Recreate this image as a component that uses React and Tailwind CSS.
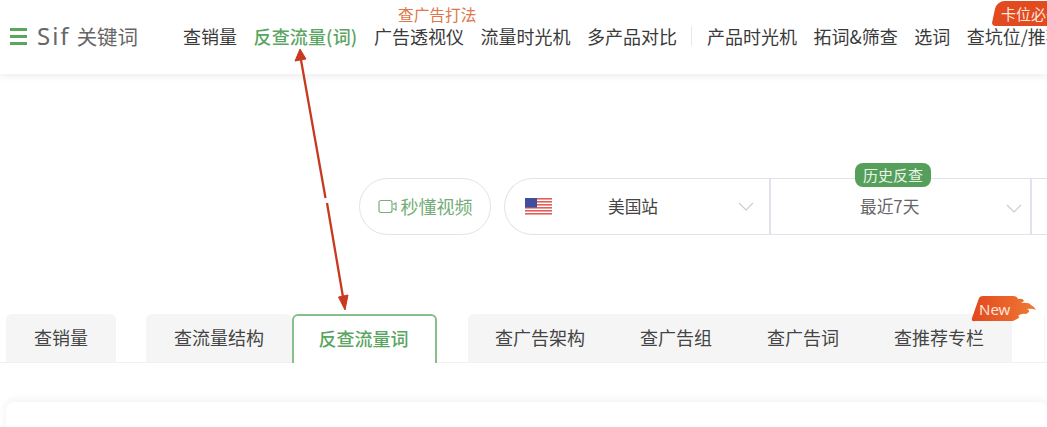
import React from "react";

const font = { fontFamily: '"Noto Sans CJK SC", "Noto Sans", sans-serif' };

function NavItem({ children, green, note, tag, className = "" }) {
  return (
    <div className={`relative shrink-0 text-[18px] leading-[26px] whitespace-nowrap ${green ? "font-medium text-[#5aa55f]" : "text-[#3a3a3a]"} ${className}`}>
      {children}
      {note && (
        <span className="absolute left-[24px] top-[-18px] text-[15.7px] leading-[20px] text-[#e0774a]">{note}</span>
      )}
      {tag && (
        <span className="absolute left-[27px] top-[-22px] h-[25px] w-[90px] pl-[7px] rounded-tl-[8px] rounded-bl-[4px] -skew-x-12 bg-[#e24a1f] text-[15px] leading-[25px] text-[#ffe9df]">
          <span className="inline-block skew-x-12">{tag}</span>
        </span>
      )}
    </div>
  );
}

function Chevron({ className = "" }) {
  return (
    <svg className={`shrink-0 ${className}`} width="16" height="9" viewBox="0 0 16 9" fill="none" stroke="#c9cbd0" strokeWidth="1.1">
      <path d="M1 1l7 7 7-7" />
    </svg>
  );
}

function VideoIcon() {
  return (
    <svg width="20" height="15" viewBox="0 0 20 15" fill="none" stroke="#77b07b" strokeWidth="1.2">
      <rect x="1" y="1.5" width="13" height="12" rx="2" />
      <path d="M15 5.5l3-1.5v7l-3-1.5" />
    </svg>
  );
}

function Flag() {
  return (
    <svg className="shrink-0" width="27" height="18" viewBox="0 0 27 18">
      <rect width="27" height="18" fill="#fff" />
      {[0, 3, 6, 9, 12, 15].map((y) => (
        <rect key={y} y={y} width="27" height="1.6" fill="#e2605c" />
      ))}
      <rect width="12" height="9.5" fill="#3f4f9c" />
    </svg>
  );
}

export default function App() {
  return (
    <div style={font} className="relative h-[427px] w-[1047px] overflow-hidden bg-white">
      <header className="flex h-[74px] items-center overflow-hidden bg-white pb-[2px] shadow-[0_2px_8px_rgba(0,0,0,0.08)]">
        <div className="flex w-[183px] shrink-0 items-center pl-[10px]">
          <div className="flex h-[17px] w-[17px] flex-col justify-between">
            <span className="h-[3px] bg-[#5aa55f]" />
            <span className="h-[3px] bg-[#5aa55f]" />
            <span className="h-[3px] bg-[#5aa55f]" />
          </div>
          <span style={{ fontFamily: '"Noto Sans", sans-serif' }} className="ml-[10px] text-[24px] leading-[28px] tracking-[2px] text-[#666]">Sif</span>
          <span className="ml-[6px] text-[20.5px] leading-[28px] text-[#666]">关键词</span>
        </div>
        <nav className="flex items-center gap-[16.5px]">
          <NavItem>查销量</NavItem>
          <NavItem green className="w-[104px] tracking-[0.15px]">反查流量(词)</NavItem>
          <NavItem note="查广告打法">广告透视仪</NavItem>
          <NavItem>流量时光机</NavItem>
          <NavItem>多产品对比</NavItem>
          <span className="-ml-[3px] -mr-[1px] h-[20px] w-px shrink-0 bg-[#e8e8e8]" />
          <NavItem>产品时光机</NavItem>
          <NavItem>拓词&amp;筛查</NavItem>
          <NavItem>选词</NavItem>
          <NavItem tag="卡位必备">查坑位/推荐</NavItem>
        </nav>
      </header>

      <section className="mt-[104px] flex h-[57px] pl-[359px]">
        <div className="flex w-[132px] shrink-0 items-center justify-center gap-[3px] rounded-full border-[1.5px] border-[#e1e3ec] text-[18px] text-[#74ad78]">
          <VideoIcon />
          <span>秒懂视频</span>
        </div>
        <div className="ml-[13px] flex min-w-[600px] grow rounded-l-full border-y-[1.5px] border-l-[1.5px] border-[#e1e3ec] text-[16.7px] text-[#444]">
          <div className="flex w-[264px] shrink-0 items-center pl-[20px] pr-[15px]">
            <Flag />
            <span className="ml-[56px] grow">美国站</span>
            <Chevron className="-mt-[1px]" />
          </div>
          <div className="relative flex w-[263px] shrink-0 items-center border-x-2 border-[#e1e3ec] pr-[8px] text-[#666]">
            <span className="ml-[89px] grow">最近7天</span>
            <Chevron className="mt-[3px]" />
            <span className="absolute left-[84px] top-[-16px] flex h-[24px] w-[76px] items-center justify-center rounded-[8px] bg-[#559f5b] text-[15px] text-[#eaf5ea]">历史反查</span>
          </div>
        </div>
      </section>

      <section className="mt-[79px] flex h-[49px] items-end border-b border-[#f1f1f1] pl-[6px] text-[18px] text-[#444]">
        <div className="flex h-[48px] w-[110px] shrink-0 items-center justify-center rounded-t-[6px] bg-[#f5f5f5] pb-[2px]">查销量</div>
        <div className="ml-[30px] flex h-[48px] w-[146px] shrink-0 items-center justify-center rounded-t-[6px] bg-[#f5f5f5] pb-[2px]">查流量结构</div>
        <div className="mb-[-1px] flex h-[49px] w-[145px] shrink-0 items-center justify-center rounded-t-[6px] border-2 border-b-0 border-[#86bf8a] bg-white pb-[2px] pr-[2px] font-medium text-[#5aa55f]">反查流量词</div>
        <div className="relative ml-[31px] flex h-[48px] w-[544px] shrink-0 items-center gap-[55px] rounded-t-[6px] bg-[#f5f5f5] pb-[2px] pl-[27px] whitespace-nowrap">
          <span>查广告架构</span>
          <span>查广告组</span>
          <span>查广告词</span>
          <span>查推荐专栏</span>
          <svg className="absolute left-[503px] top-[-18px]" width="65" height="26" viewBox="0 0 65 26">
            <defs>
              <linearGradient id="flame" x1="0" x2="1" y1="0" y2="0">
                <stop offset="0" stopColor="#e2481e" />
                <stop offset="1" stopColor="#ee7a35" />
              </linearGradient>
            </defs>
            <path d="M8 2Q9 0 12 0H42Q46 0 47 3Q52 2 53 5L50 7Q58 6 60 9Q64 11 65 14Q61 12 56 13Q61 15 55 18Q50 17 47 20Q50 21 46 23L42 25H4Q0 26 1 22Z" fill="url(#flame)" />
          </svg>
          <span style={{ fontFamily: '"Noto Sans", sans-serif' }} className="absolute left-[511px] top-[-16px] text-[15px] leading-[22px] text-[#ffe3d6]">New</span>
        </div>
        <div className="ml-[32px] h-[48px] w-px shrink-0 bg-[#f6f6f6]" />
      </section>

      <main className="ml-[6px] mt-[39px] h-[40px] rounded-t-[8px] bg-white shadow-[0_-2px_8px_rgba(0,0,0,0.06)]" />

      <svg className="pointer-events-none absolute left-0 top-0" width="1047" height="427" viewBox="0 0 1047 427">
        <path d="M301 60L325.5 198M327 203L343 297" stroke="#c8391f" strokeWidth="2.3" fill="none" />
        <path d="M300 49L295 61L306 59Z M345 310L338.5 297L348 295Z" fill="#c8391f" stroke="#c8391f" strokeWidth="1" />
      </svg>
    </div>
  );
}
